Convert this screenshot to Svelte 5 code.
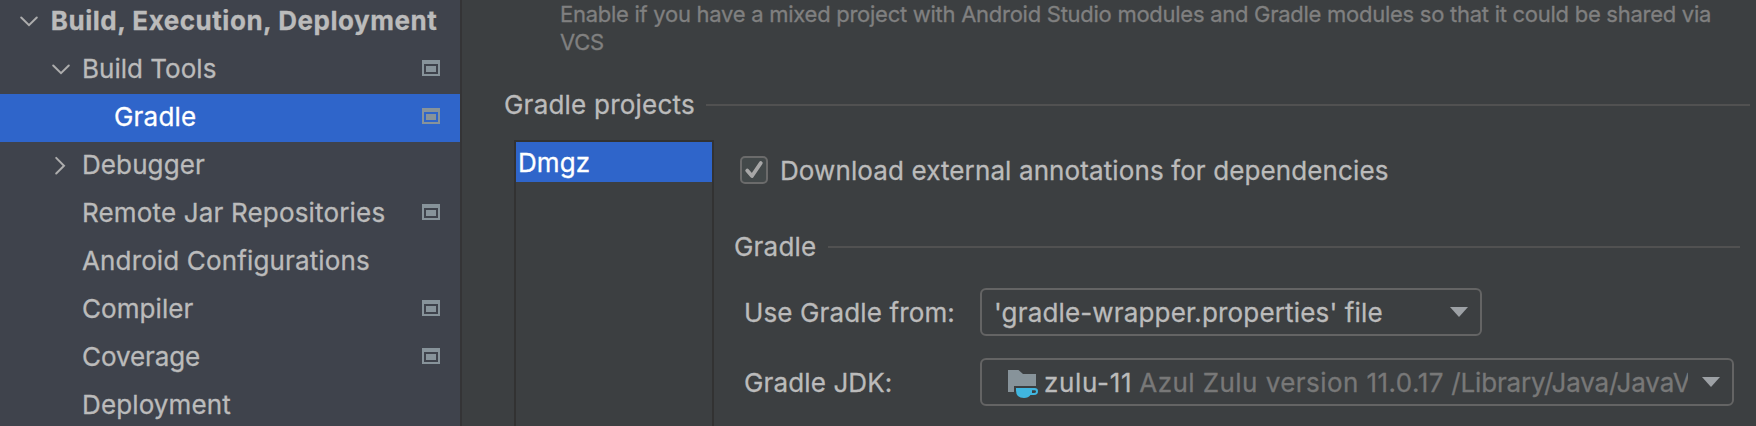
<script>
  const tree = [
    { label: 'Build, Execution, Deployment', level: 0, arrow: 'down', bold: true, spacing: 0.53 },
    { label: 'Build Tools', level: 1, arrow: 'down', project: true, spacing: 0.02 },
    { label: 'Gradle', level: 2, project: true, selected: true, spacing: 0.2 },
    { label: 'Debugger', level: 1, arrow: 'right', spacing: 0.1 },
    { label: 'Remote Jar Repositories', level: 1, project: true, spacing: 0.17 },
    { label: 'Android Configurations', level: 1, spacing: 0.14 },
    { label: 'Compiler', level: 1, project: true, spacing: 0.067 },
    { label: 'Coverage', level: 1, project: true, spacing: -0.08 },
    { label: 'Deployment', level: 1, spacing: 0.13 }
  ];
</script>

{#snippet dropArrow()}
  <svg class="drop" width="18" height="10" viewBox="0 0 18 10"><path d="M0 0H18L9 10Z" fill="#9da1a5" /></svg>
{/snippet}

<div class="window">
  <nav class="sidebar">
    {#each tree as item}
      <div class="row level{item.level}" class:selected={item.selected}>
        <span class="toggle">
          {#if item.arrow === 'down'}
            <svg width="20" height="20" viewBox="0 0 20 20"><path d="M2.2 5.5L10 13.2L17.8 5.5" /></svg>
          {:else if item.arrow === 'right'}
            <svg width="20" height="20" viewBox="0 0 20 20"><path d="M5.2 1.9L13 9.7L5.2 17.5" /></svg>
          {/if}
        </span>
        <span class="label" class:bold={item.bold} style="letter-spacing: {item.spacing}px">{item.label}</span>
        {#if item.project}
          <svg class="scope" width="18" height="16" viewBox="0 0 18 16" shape-rendering="crispEdges">
            <path fill-rule="evenodd" d="M0 0H18V16H0ZM2 4V14H16V4ZM4 6H14V12H4Z" />
          </svg>
        {/if}
      </div>
    {/each}
  </nav>

  <main>
    <p class="hint">
      <span class="hint-first">Enable if you have a mixed project with Android Studio modules and Gradle modules so that it could be shared via</span>
      <span class="hint-last">VCS</span>
    </p>

    <div class="heading projects-heading"><span>Gradle projects</span><i></i></div>

    <div class="projects">
      <div class="list"><div class="list-item">Dmgz</div></div>

      <div class="settings">
        <div class="check-row">
          <svg width="28" height="28" viewBox="0 0 28 28">
            <rect x="1" y="1" width="26" height="26" rx="4" fill="#43494a" stroke="#6b6b6b" stroke-width="2" />
            <path d="M7.2 14.6L12 20L20.8 7" fill="none" stroke="#a7a7a7" stroke-width="3.8" stroke-linecap="round" stroke-linejoin="round" />
          </svg>
          <span>Download external annotations for dependencies</span>
        </div>

        <div class="heading gradle-heading"><span>Gradle</span><i></i></div>

        <div class="field from">
          <span class="name">Use Gradle from:</span>
          <div class="select narrow">
            <span class="value">'gradle-wrapper.properties' file</span>
            {@render dropArrow()}
          </div>
        </div>

        <div class="field jdk">
          <span class="name">Gradle JDK:</span>
          <div class="select wide">
            <svg class="folder" width="32" height="32" viewBox="0 0 32 32">
              <path d="M2 4H12.5L17 8H30V20H8V26H2Z" fill="#87939a" />
              <path fill-rule="evenodd" d="M10 22H28.5Q32 22 32 25.2Q32 29 28 29H24.5Q22.5 32 18 32Q10 32 10 24.5ZM26 24.2V27H28Q30 27 30 25.5Q30 24.2 28.5 24.2Z" fill="#40b6e0" />
            </svg>
            <span class="jdk-text"><span class="jdk-name">zulu-11</span><span class="jdk-version">Azul Zulu version 11.0.17</span><span class="jdk-path">/Library/Java/JavaV</span></span>
            {@render dropArrow()}
          </div>
        </div>
      </div>
    </div>
  </main>
</div>

<style>
  :global(body) {
    background: #3c3f41;
    overflow: hidden;
  }
  .window {
    display: flex;
    box-sizing: border-box;
    width: 1756px;
    height: 426px;
    overflow: hidden;
    background: #3c3f41;
    color: #bbbbbb;
    font-family: Inter, sans-serif;
    font-size: 26px;
    white-space: nowrap;
    -webkit-text-stroke: 0.3px currentColor;
  }
  svg { flex: none; display: block; }
  .sidebar {
    flex: none;
    width: 460px;
    height: 430px;
    margin-top: -2px;
    background: #3f434c;
    border-right: 2px solid #343436;
  }
  .row {
    display: flex;
    align-items: flex-start;
    box-sizing: border-box;
    height: 48px;
    padding: 0 20px 0 19px;
    line-height: 45px;
  }
  .level1 { padding-left: 51px; }
  .level2 { padding-left: 83px; }
  .selected { background: #2f65ca; color: #fff; }
  .toggle { flex: none; width: 31px; height: 20px; padding-top: 14px; }
  .toggle path {
    fill: none;
    stroke: #adadad;
    stroke-width: 2;
    stroke-linecap: round;
  }
  .bold { font-weight: 700; padding-left: 0.7px; }
  .label { flex: 1; }
  .scope { margin-top: 14px; fill: #87939a; }
  main {
    flex: 1;
    min-width: 0;
    padding: 0 6px 0 42px;
    display: flex;
    flex-direction: column;
  }
  .hint {
    margin: 0 0 0 56px;
    height: 88px;
    color: #808080;
    font-size: 22px;
    line-height: 28px;
  }
  .hint span { display: block; }
  .hint-first { letter-spacing: -0.268px; }
  .hint-last { letter-spacing: -0.3px; }
  .heading { display: flex; align-items: center; height: 34px; line-height: 34px; }
  .heading i { flex: 1; height: 2px; background: #515151; }
  .projects-heading { letter-spacing: 0.22px; }
  .projects-heading i { margin-left: 11px; }
  .projects { flex: 1; display: flex; margin: 18px 0 0 10px; }
  .list {
    flex: none;
    width: 196px;
    border: 2px solid #323232;
    border-bottom: 0;
  }
  .list-item {
    height: 40px;
    padding-left: 2px;
    background: #2f65ca;
    color: #fff;
    line-height: 41px;
    letter-spacing: 0.1px;
  }
  .settings { flex: 1; min-width: 0; padding: 16px 10px 0 20px; }
  .check-row { display: flex; gap: 12px; margin-left: 6px; height: 28px; line-height: 29px; letter-spacing: 0.11px; }
  .gradle-heading { margin-top: 46px; letter-spacing: 0.2px; }
  .gradle-heading i { margin-left: 12px; }
  .field { display: flex; align-items: center; height: 48px; margin-left: 10px; }
  .from { margin-top: 24px; }
  .jdk { margin-top: 22px; }
  .name { flex: none; width: 236px; letter-spacing: 0.13px; }
  .select {
    display: flex;
    align-items: center;
    box-sizing: border-box;
    height: 48px;
    border: 2px solid #646464;
    border-radius: 6px;
    padding: 0 12px;
  }
  .narrow { width: 502px; }
  .wide { width: 754px; padding-left: 24px; }
  .value { flex: 1; letter-spacing: 0.16px; }
  .jdk-text { width: 644px; overflow: hidden; margin-left: 6px; flex: none; }
  .jdk-name { letter-spacing: 0.68px; }
  .jdk-version, .jdk-path { color: #787878; }
  .jdk-version { margin-left: 7px; letter-spacing: 0.44px; }
  .jdk-path { margin-left: 7.5px; letter-spacing: -0.17px; }
  .wide .drop { margin-left: auto; }
  .name, .value, .jdk-text { line-height: 44px; padding-top: 2px; }
</style>
